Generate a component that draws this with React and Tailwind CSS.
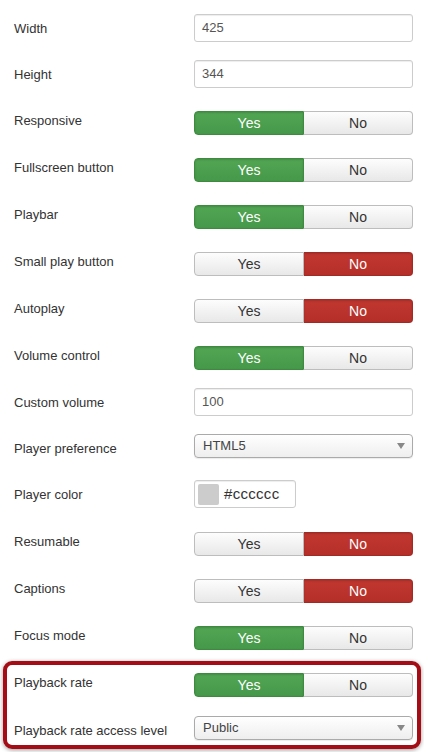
import React from 'react';

const font = { fontFamily: '"Liberation Sans", Arial, sans-serif' };

// each field: label, kind, value, top padding before the row
const fields = [
  { label: 'Width', kind: 'input', value: '425', pt: 'pt-[14px]' },
  { label: 'Height', kind: 'input', value: '344', pt: 'pt-[18px]' },
  { label: 'Responsive', kind: 'toggle', value: true, pt: 'pt-[23px]' },
  { label: 'Fullscreen button', kind: 'toggle', value: true, pt: 'pt-[23px]' },
  { label: 'Playbar', kind: 'toggle', value: true, pt: 'pt-[23px]' },
  { label: 'Small play button', kind: 'toggle', value: false, pt: 'pt-[23px]' },
  { label: 'Autoplay', kind: 'toggle', value: false, pt: 'pt-[23px]' },
  { label: 'Volume control', kind: 'toggle', value: true, pt: 'pt-[23px]' },
  { label: 'Custom volume', kind: 'input', value: '100', pt: 'pt-[18px]' },
  { label: 'Player preference', kind: 'select', value: 'HTML5', pt: 'pt-[18px]' },
  { label: 'Player color', kind: 'color', value: '#cccccc', pt: 'pt-[22px]' },
  { label: 'Resumable', kind: 'toggle', value: false, pt: 'pt-[24px]' },
  { label: 'Captions', kind: 'toggle', value: false, pt: 'pt-[23px]' },
  { label: 'Focus mode', kind: 'toggle', value: true, pt: 'pt-[23px]' },
];

function Toggle({ on }) {
  return (
    <div className="flex h-[24px] w-[219px] text-[14px] leading-none">
      <div
        className={
          on
            ? 'flex-1 flex items-center justify-center rounded-l-[4px] border border-[#3d8b3f] bg-gradient-to-b from-[#51a653] to-[#46984a] text-white shadow-[inset_0_1px_2px_rgba(0,0,0,0.15)]'
            : 'flex-1 flex items-center justify-center rounded-l-[4px] border border-[#bdbdbd] bg-gradient-to-b from-[#fdfdfd] to-[#e8e8e8] text-[#333]'
        }
      >
        Yes
      </div>
      <div
        className={
          !on
            ? 'flex-1 flex items-center justify-center rounded-r-[4px] border border-l-0 border-[#a12a25] bg-gradient-to-b from-[#c0372f] to-[#b52f29] text-white shadow-[inset_0_1px_2px_rgba(0,0,0,0.15)]'
            : 'flex-1 flex items-center justify-center rounded-r-[4px] border border-l-0 border-[#bdbdbd] bg-gradient-to-b from-[#fdfdfd] to-[#e8e8e8] text-[#333]'
        }
      >
        No
      </div>
    </div>
  );
}

function TextInput({ value }) {
  return (
    <div className="flex h-[28px] w-[219px] items-center rounded-[3px] border border-[#cccccc] bg-white px-[7px] text-[13px] text-[#555] shadow-[inset_0_1px_1px_rgba(0,0,0,0.075)]">
      {value}
    </div>
  );
}

function Select({ value }) {
  return (
    <div className="flex h-[24px] w-[219px] items-center justify-between rounded-[4px] border border-[#aaaaaa] bg-gradient-to-b from-white to-[#eeeeee] pl-[8px] pr-[7px] text-[13px] text-[#444] shadow-[0_1px_1px_rgba(0,0,0,0.08)]">
      <span>{value}</span>
      <svg width="8" height="6" viewBox="0 0 8 6">
        <path d="M0 0 L8 0 L4 6 Z" fill="#888" />
      </svg>
    </div>
  );
}

function ColorInput({ value }) {
  return (
    <div className="flex h-[28px] w-[102px] items-center gap-[5px] rounded-[3px] border border-[#cccccc] bg-white pl-[3px] text-[15px] text-[#333] shadow-[inset_0_1px_1px_rgba(0,0,0,0.075)]">
      <div className="h-[21px] w-[21px] rounded-[2px] bg-[#cccccc]" />
      <span className="tracking-[0.3px]">{value}</span>
    </div>
  );
}

function Control({ field }) {
  if (field.kind === 'toggle') return <Toggle on={field.value} />;
  if (field.kind === 'select') return <Select value={field.value} />;
  if (field.kind === 'color') return <ColorInput value={field.value} />;
  return <TextInput value={field.value} />;
}

function Row({ field }) {
  const labelPad = field.kind === 'toggle' ? 'pt-px' : 'pt-[6px]';
  return (
    <div className={`flex items-start ${field.pt}`}>
      <div className={`w-[180px] text-[13px] leading-[18px] text-[#333] ${labelPad}`}>{field.label}</div>
      <Control field={field} />
    </div>
  );
}

export default function App() {
  return (
    <div className="h-[752px] w-[424px] overflow-hidden bg-white pl-[14px]" style={font}>
      {fields.map((f) => (
        <Row key={f.label} field={f} />
      ))}

      {/* highlighted group */}
      <div className="ml-[-11px] mt-[11px] w-[418px] rounded-[9px] border-4 border-[#a50d16] pb-[5px] pl-[7px] pt-[8px] shadow-[0_1px_4px_rgba(0,0,0,0.4)]">
        <div className="flex items-start">
          <div className="w-[180px] pt-px text-[13px] leading-[18px] text-[#333]">Playback rate</div>
          <Toggle on={true} />
        </div>
        <div className="flex items-start pt-[19px]">
          <div className="w-[180px] pt-[6px] text-[13px] leading-[18px] text-[#333]">Playback rate access level</div>
          <Select value="Public" />
        </div>
      </div>
    </div>
  );
}
